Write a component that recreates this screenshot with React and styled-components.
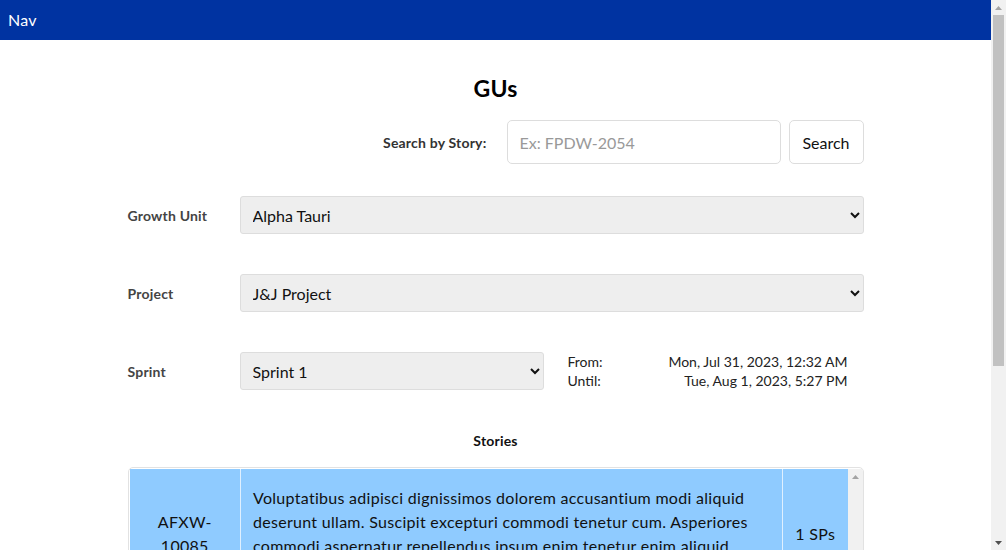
import React from "react";
import styled, { createGlobalStyle } from "styled-components";

const GlobalStyle = createGlobalStyle`
    body {
        margin: 0;
        font-family: "Lato", "Noto Sans", sans-serif;
        letter-spacing: 0.2px;
        color: #222;
        background: #fff;
    }
`;

const stories = [
    {
        id: "AFXW-10085",
        text: "Voluptatibus adipisci dignissimos dolorem accusantium modi aliquid deserunt ullam. Suscipit excepturi commodi tenetur cum. Asperiores commodi aspernatur repellendus ipsum enim tenetur enim aliquid voluptas. Quod eius laboriosam nisi.",
        sp: 1,
    },
    {
        id: "AFXW-10086",
        text: "Nesciunt dolorum quibusdam eveniet ratione fugit laborum. Quae at possimus similique ipsam sequi nemo cumque rerum.",
        sp: 3,
    },
    {
        id: "AFXW-10087",
        text: "Magni facere sapiente quisquam atque velit ducimus. Illo dolor molestiae harum quo officiis vero.",
        sp: 2,
    },
];

const Arrow = ({ up, color }) => (
    <svg width="7" height="4" viewBox="0 0 7 4">
        <path d={up ? "M0 4 L3.5 0 L7 4 Z" : "M0 0 L3.5 4 L7 0 Z"} fill={color} />
    </svg>
);

function App() {
    return (
        <Shell>
            <GlobalStyle />
            <Page>
                <NavBar>Nav</NavBar>
                <Main>
                    <Title>GUs</Title>
                    <SearchRow>
                        <SearchLabel>Search by Story:</SearchLabel>
                        <SearchInput placeholder="Ex: FPDW-2054" />
                        <SearchButton>Search</SearchButton>
                    </SearchRow>
                    <FieldRow>
                        <FieldLabel>Growth Unit</FieldLabel>
                        <Select defaultValue="alpha">
                            <option value="alpha">Alpha Tauri</option>
                        </Select>
                    </FieldRow>
                    <FieldRow>
                        <FieldLabel>Project</FieldLabel>
                        <Select defaultValue="jj">
                            <option value="jj">J&amp;J Project</option>
                        </Select>
                    </FieldRow>
                    <FieldRow>
                        <FieldLabel>Sprint</FieldLabel>
                        <Select $width="304px" defaultValue="s1">
                            <option value="s1">Sprint 1</option>
                        </Select>
                        <Dates>
                            <span>From:</span>
                            <DateValue>Mon, Jul 31, 2023, 12:32 AM</DateValue>
                            <span>Until:</span>
                            <DateValue>Tue, Aug 1, 2023, 5:27 PM</DateValue>
                        </Dates>
                    </FieldRow>
                    <SubTitle>Stories</SubTitle>
                    <TableBox>
                        <Table>
                            <colgroup>
                                <col style={{ width: 111 }} />
                                <col />
                                <col style={{ width: 65 }} />
                            </colgroup>
                            <tbody>
                                {stories.map((s) => (
                                    <tr key={s.id}>
                                        <IdCell>{s.id}</IdCell>
                                        <TextCell>{s.text}</TextCell>
                                        <SpCell>{s.sp} SPs</SpCell>
                                    </tr>
                                ))}
                            </tbody>
                        </Table>
                        <Rail $inner>
                            <ArrowBox>
                                <Arrow up color="#a3a3a3" />
                            </ArrowBox>
                        </Rail>
                    </TableBox>
                </Main>
            </Page>
            <Rail>
                <ArrowBox>
                    <Arrow up color="#a3a3a3" />
                </ArrowBox>
                <Thumb />
                <Spacer />
                <ArrowBox>
                    <Arrow color="#505050" />
                </ArrowBox>
            </Rail>
        </Shell>
    );
}

export default App;

const Shell = styled.div`
    display: flex;
    align-items: flex-start;
`;
const Page = styled.div`
    flex: 1;
    min-width: 0;
`;
const Rail = styled.div`
    flex: none;
    width: 15px;
    height: ${(p) => (p.$inner ? "auto" : "100vh")};
    position: ${(p) => (p.$inner ? "static" : "sticky")};
    top: 0;
    background: #f1f1f1;
    display: flex;
    flex-direction: column;
    align-items: center;
`;
const ArrowBox = styled.div`
    height: 15px;
    display: flex;
    align-items: center;
    justify-content: center;
`;
const Thumb = styled.div`
    width: 11px;
    height: 351px;
    background: #c1c1c1;
`;
const Spacer = styled.div`
    flex: 1;
`;
const NavBar = styled.div`
    height: 40px;
    background: #0033a1;
    color: #fff;
    font-size: 16px;
    line-height: 40px;
    padding: 0 8px;
`;
const Main = styled.div`
    max-width: 736px;
    margin: 0 auto;
    padding-bottom: 40px;
`;
const Title = styled.h1`
    margin: 34px 0 18px;
    font-size: 23px;
    line-height: 28px;
    font-weight: 700;
    text-align: center;
    color: #000;
`;
const SearchRow = styled.div`
    display: flex;
    justify-content: flex-end;
    align-items: center;
    gap: 8px;
`;
const SearchLabel = styled.label`
    font-size: 14px;
    font-weight: 700;
    color: #333;
    margin-right: 12px;
`;
const SearchInput = styled.input`
    box-sizing: border-box;
    width: 274px;
    height: 44px;
    border: 1px solid #ddd;
    border-radius: 5px;
    padding: 0 12px;
    font: inherit;
    font-size: 16px;
    color: #222;
    &::placeholder {
        color: #999;
    }
`;
const SearchButton = styled.button`
    box-sizing: border-box;
    width: 75px;
    height: 44px;
    border: 1px solid #ddd;
    border-radius: 5px;
    background: #fff;
    font: inherit;
    font-size: 16px;
    color: #111;
`;
const FieldRow = styled.div`
    display: flex;
    align-items: center;
    margin-top: 32px;
    & + & {
        margin-top: 40px;
    }
    &:last-of-type {
        margin-top: 41px;
    }
`;
const FieldLabel = styled.label`
    width: 112px;
    flex: none;
    font-size: 14px;
    font-weight: 700;
    color: #444;
`;
const Select = styled.select`
    box-sizing: border-box;
    width: ${(p) => p.$width || "624px"};
    height: 38px;
    background: #eee;
    border: 1px solid #ddd;
    border-radius: 3px;
    padding: 0 8px;
    font: inherit;
    font-size: 16px;
    color: #111;
`;
const Dates = styled.div`
    display: grid;
    grid-template-columns: auto 1fr;
    width: 280px;
    margin-left: 24px;
    font-size: 14px;
    line-height: 19px;
    letter-spacing: 0;
    color: #222;
`;
const DateValue = styled.span`
    text-align: right;
`;
const SubTitle = styled.h2`
    margin: 42px 0 18px;
    font-size: 14px;
    font-weight: 700;
    text-align: center;
    color: #111;
`;
const TableBox = styled.div`
    display: flex;
    align-items: stretch;
    border: 1px solid #e2e2e2;
    border-radius: 5px;
    padding: 1px 0 1px 1px;
    max-height: 300px;
    overflow: hidden;
`;
const Table = styled.table`
    flex: 1;
    table-layout: fixed;
    border-collapse: collapse;
    align-self: flex-start;
    font-size: 16px;
    line-height: 24px;
    letter-spacing: 0.29px;
    color: #111;
    td {
        background: #8fcbff;
        border: 1px solid #dff0ff;
        padding: 17px 12px 16px;
        vertical-align: middle;
    }
    tr:first-child td {
        border-top: none;
    }
    td:first-child {
        border-left: none;
    }
    td:last-child {
        border-right: none;
    }
`;
const IdCell = styled.td`
    text-align: center;
`;
const TextCell = styled.td``;
const SpCell = styled.td`
    text-align: center;
    white-space: nowrap;
`;
